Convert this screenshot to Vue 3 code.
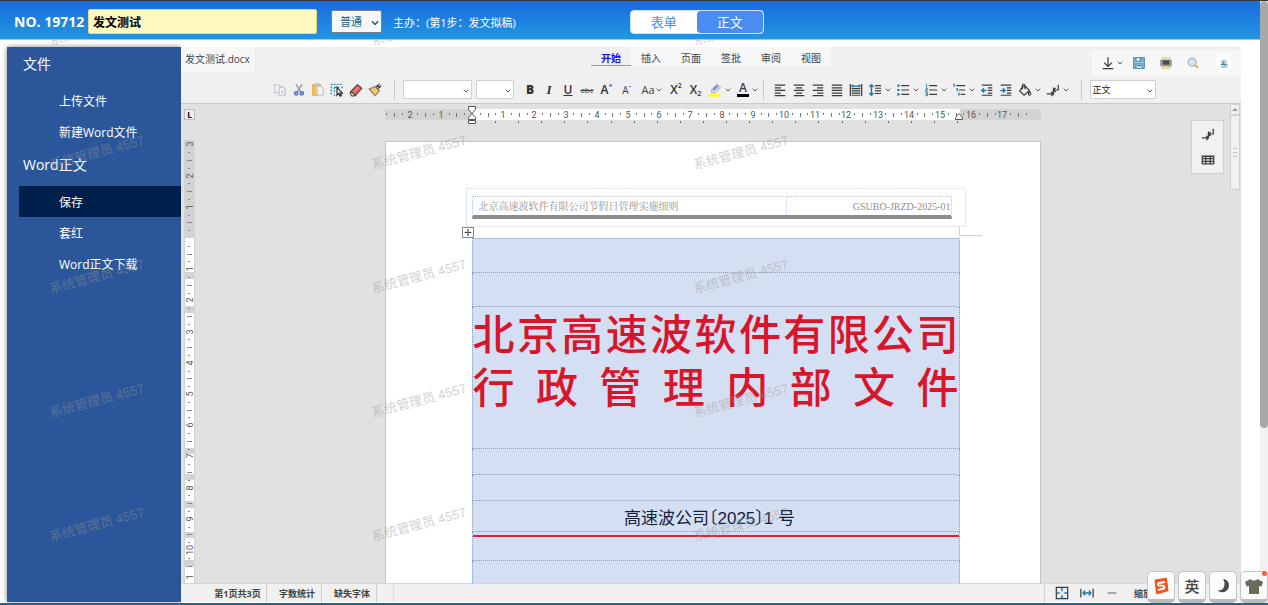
<template>
  <div class="page">
    <header class="topbar">
      <label class="doc-no" for="title">NO. 19712</label>
      <input id="title" v-model="title" class="title-input" type="text" />
      <div class="select-wrap level">
        <select v-model="level" aria-label="缓急">
          <option>普通</option>
        </select>
        <svg class="chev" viewBox="0 0 8 6"><path d="M1 1.2 4 4.4 7 1.2" /></svg>
      </div>
      <span class="step">主办：(第1步：发文拟稿)</span>
      <div class="switch">
        <button type="button" :class="{ on: view === 'form' }" @click="view = 'form'">表单</button>
        <button type="button" :class="{ on: view === 'text' }" @click="view = 'text'">正文</button>
      </div>
    </header>

    <main class="main">
      <nav class="sidebar">
        <section v-for="group in menu" :key="group.name">
          <h3>{{ group.name }}</h3>
          <button
            v-for="item in group.items"
            :key="item"
            type="button"
            :class="{ active: item === current }"
            @click="current = item"
          >{{ item }}</button>
        </section>
      </nav>

      <div class="editor">
        <div class="tabbar">
          <span class="file-name">发文测试.docx</span>
          <div class="tabs">
            <button
              v-for="t in tabs"
              :key="t"
              type="button"
              :class="{ active: t === tab }"
              @click="tab = t"
            >{{ t }}</button>
          </div>
          <div class="quick">
            <button type="button" class="drop" aria-label="下载">
              <svg class="ico" viewBox="0 0 16 16"><path d="M8 1.5v10M3.5 7.5 8 12l4.5-4.5M2 14.5h12" /></svg>
              <svg class="chev" viewBox="0 0 8 6"><path d="M1 1.2 4 4.4 7 1.2" /></svg>
            </button>
            <button type="button" aria-label="保存">
              <svg class="ico" viewBox="0 0 16 16">
                <path d="M2 2h12v12H2z" fill="#a9cfe0" stroke="#4388ad" />
                <path d="M4.5 2h7v4h-7z" fill="#f3f8fa" stroke="#4388ad" />
                <path d="M4.5 9h7v5h-7z" fill="#fff" stroke="#4388ad" />
                <path d="M9.5 2.5v3M6 11h4" stroke="#2f6f94" />
              </svg>
            </button>
            <button type="button" aria-label="打印">
              <svg class="ico" viewBox="0 0 16 16">
                <path d="M4 2h8v3H4zM4 11h8v3H4z" fill="#f3ecb9" stroke="#d2c98a" />
                <path d="M2 5h12v6H2z" fill="#b5b5b5" stroke="#999" />
                <path d="M4 5h8v5H4z" fill="#4a4a4a" stroke="none" />
              </svg>
            </button>
            <button type="button" aria-label="查找">
              <svg class="ico" viewBox="0 0 16 16">
                <circle cx="7" cy="7" r="4.5" fill="#cfe6f5" stroke="#b4bcc2" stroke-width="1.6" />
                <path d="m10.5 10.5 3 3" stroke="#f2a93b" stroke-width="2.6" />
              </svg>
            </button>
            <button type="button" class="avatar">系</button>
          </div>
        </div>

        <div class="toolbar">
          <button v-for="n in clip" :key="n" type="button" class="tool" :aria-label="n">
            <svg class="ico" viewBox="0 0 16 16">
              <g v-if="n === '复制'" fill="#f4f4f6" stroke="#c3c6ce">
                <path d="M2 2h5l2 2v7H2z" /><path d="M7 5h5l2 2v7H7z" /><path d="M9 9h3M9 11h3" />
              </g>
              <g v-else-if="n === '剪切'">
                <path d="M4.5 1.5 10 10M11.5 1.5 6 10" stroke="#99a" stroke-width="1.6" />
                <circle cx="4.8" cy="11.8" r="2" fill="#8ca5e4" stroke="#5775cb" stroke-width="1.5" />
                <circle cx="11.2" cy="11.8" r="2" fill="#8ca5e4" stroke="#5775cb" stroke-width="1.5" />
              </g>
              <g v-else-if="n === '粘贴'">
                <path d="M2 2h9v12H2z" fill="#f3c64c" stroke="#e0b34a" />
                <path d="M7 4h5l2 2v8H7z" fill="#f3f3f5" stroke="#c8cad0" />
                <path d="M5 1h4v2H5z" fill="#ddd" stroke="#bbb" />
              </g>
              <g v-else-if="n === '选择'">
                <path d="M1 1.5h13M1.500 4v10M4 14h4M5 5v7M14 4v3M5 5h7" stroke="#1d7fb4" stroke-width="1.4" stroke-dasharray="2 1.4" />
                <path d="M8 5v9l2-2 1.6 3 1.5-.8L11.500 11.500H14z" fill="#fff" stroke="#333" />
              </g>
              <g v-else-if="n === '清除'">
                <path d="m9.500 2 5 4-7 8-5.500-4z" fill="#f26d6d" stroke="#543" />
                <path d="m2 10 5.500 4-1 .8H3.200L1.500 12z" fill="#fff" stroke="#543" />
              </g>
              <g v-else>
                <path d="M1.500 7 8 4l5 5-5 5.500z" fill="#fbc85f" stroke="#977" />
                <path d="M9 5 13.500 1M11 6.500l4-3.500M10 2.500l4 3" stroke="#444" stroke-width="1.5" />
              </g>
            </svg>
          </button>
          <i class="sep"></i>
          <div class="select-wrap font">
            <select aria-label="字体"><option></option></select>
            <svg class="chev" viewBox="0 0 8 6"><path d="M1 1.2 4 4.4 7 1.2" /></svg>
          </div>
          <div class="select-wrap size">
            <select aria-label="字号"><option></option></select>
            <svg class="chev" viewBox="0 0 8 6"><path d="M1 1.2 4 4.4 7 1.2" /></svg>
          </div>

          <button type="button" class="tool txt"><b>B</b></button>
          <button type="button" class="tool txt serif"><i>I</i></button>
          <button type="button" class="tool txt"><u>U</u></button>
          <button type="button" class="tool tiny"><s>abc</s></button>
          <button type="button" class="tool mid txt">A<sup class="blue">+</sup></button>
          <button type="button" class="tool mid small">A<sup class="blue">-</sup></button>
          <button type="button" class="tool drop case">
            <span>Aa</span>
            <svg class="chev" viewBox="0 0 8 6"><path d="M1 1.2 4 4.4 7 1.2" /></svg>
          </button>
          <button type="button" class="tool txt">X<sup>2</sup></button>
          <button type="button" class="tool mid txt">X<sub>2</sub></button>
          <button type="button" class="tool drop" aria-label="突出显示">
            <svg class="ico" viewBox="0 0 16 16">
              <path d="M4 8 10 1.500l4 3.500-6 6H4z" fill="#dcdcec" stroke="#b9b9c8" />
              <path d="m6 8 5-5" stroke="#7d7df0" stroke-width="2.4" />
              <path d="M1 14h13" stroke="#ff0" stroke-width="3" />
            </svg>
            <svg class="chev" viewBox="0 0 8 6"><path d="M1 1.2 4 4.4 7 1.2" /></svg>
          </button>
          <button type="button" class="tool drop" aria-label="字体颜色">
            <span class="font-color">A</span>
            <svg class="chev" viewBox="0 0 8 6"><path d="M1 1.2 4 4.4 7 1.2" /></svg>
          </button>
          <i class="sep near"></i>

          <button v-for="n in para" :key="n.name" type="button" class="tool" :class="{ drop: n.drop }" :aria-label="n.name">
            <svg class="ico" viewBox="0 0 16 16">
              <path v-if="n.frame" d="M1.500 1v14M14.500 1v14" />
              <path v-if="n.d" :d="n.d" />
              <path v-if="n.accent" :d="n.accent" stroke="#1d78ad" :stroke-width="n.w || 1.300" />
            </svg>
            <svg v-if="n.drop" class="chev" viewBox="0 0 8 6"><path d="M1 1.2 4 4.4 7 1.2" /></svg>
          </button>
          <i class="sep"></i>
          <div class="select-wrap style">
            <select aria-label="样式"><option>正文</option></select>
            <svg class="chev" viewBox="0 0 8 6"><path d="M1 1.2 4 4.4 7 1.2" /></svg>
          </div>
        </div>

        <div class="workspace">
          <div class="v-side">
            <div class="tab-stop">L</div>
            <svg class="v-ruler" width="11" height="443">
              <rect width="11" height="443" fill="#d3d3d3" />
              <rect v-for="s in vSegments" :key="s[0]" x="1" :y="s[0]" width="9" :height="s[1]" fill="#fff" />
              <rect v-for="t in vTicks" :key="t.y" :x="t.half ? 3 : 4" :y="t.y" :width="t.half ? 5 : 2" height="1" fill="#888" />
              <text v-for="n in vNumbers" :key="n.y" :transform="`translate(9 ${n.y}) rotate(-90)`" text-anchor="middle">{{ n.label }}</text>
            </svg>
          </div>

          <div class="canvas">
            <svg class="h-ruler" width="656" height="19">
              <rect width="656" height="11" y="3" fill="#d3d3d3" />
              <rect x="87" y="3" width="488" height="11" fill="#fff" />
              <rect v-for="t in hTicks" :key="t.x" :x="t.x" y="7" width="1" :height="t.half ? 4 : 2" fill="#777" />
              <rect v-for="x in hStops" :key="'s' + x" :x="x" y="15" width="1" height="2" fill="#666" />
              <text v-for="n in hNumbers" :key="n.x" :x="n.x" y="12" text-anchor="middle">{{ n.label }}</text>
              <path d="M83.500.500h7v3l-3.500 4-3.500-4zM83.500 13.500v-2l3.500-4 3.500 4v2zM83.500 14.500h7v3h-7z" fill="#fff" stroke="#555" />
              <path d="M570.500 13.500v-2l3.500-4 3.500 4v2z" fill="#fff" stroke="#555" />
            </svg>

            <article class="sheet">
              <div class="sheet-head">
                <div class="head-row">
                  <span>北京高速波软件有限公司节假日管理实施细则</span>
                  <span class="code">GSUBO-JRZD-2025-01</span>
                </div>
              </div>
              <div class="corner">
                <span class="handle">
                  <svg viewBox="0 0 11 11"><path d="M5.500 1.500v8M1.500 5.500h8M4.500 2.500h2M4.500 8.500h2M2.500 4.500v2M8.500 4.500v2" /></svg>
                </span>
                <span class="mark"></span>
              </div>
              <table>
                <tbody>
                  <tr class="tall"><td></td></tr>
                  <tr class="tall"><td></td></tr>
                  <tr class="red-head">
                    <td>
                      <p>北京高速波软件有限公司</p>
                      <p>行政管理内部文件</p>
                    </td>
                  </tr>
                  <tr><td></td></tr>
                  <tr><td></td></tr>
                  <tr class="number"><td>高速波公司〔2025〕1 号</td></tr>
                  <tr class="rule"><td></td></tr>
                  <tr class="tall"><td></td></tr>
                </tbody>
              </table>
            </article>
          </div>

          <div class="float-tools">
            <button type="button" aria-label="段落标记">
              <svg class="ico" viewBox="0 0 16 16"><path :d="markPath" /></svg>
            </button>
            <button type="button" aria-label="表格">
              <svg class="ico" viewBox="0 0 16 16"><path d="M1.500 3.500h13v9h-13zM1.500 6.500h13M1.500 9.500h13M5.500 3.500v9M10.500 3.500v9M1.500 4h13" /></svg>
            </button>
          </div>

          <div class="doc-scroll">
            <span class="up"></span>
            <span class="thumb"></span>
          </div>
        </div>

        <footer class="status">
          <button type="button" class="pages">第1页共3页</button>
          <button type="button">字数统计</button>
          <button type="button">缺失字体</button>
          <i class="blank"></i>
          <div class="zoom">
            <button type="button" aria-label="整页">
              <svg class="ico" viewBox="0 0 16 16">
                <path d="M1.500 1.500h13v13h-13z" />
                <path d="M8 3v3M8 10v3M3 8h3M10 8h3M7 4l1-1 1 1M7 12l1 1 1-1M4 7 3 8l1 1M12 7l1 1-1 1" stroke="#1d78ad" />
              </svg>
            </button>
            <button type="button" aria-label="页宽">
              <svg class="ico" viewBox="0 0 16 16">
                <path d="M1 3v10M15 3v10" />
                <path d="M3.500 8h9M6 5 3.500 8 6 11M10 5l2.500 3-2.500 3" stroke="#1d78ad" stroke-width="1.5" />
              </svg>
            </button>
            <button type="button" aria-label="缩小">
              <svg class="ico" viewBox="0 0 16 16"><path d="M3 8h10" stroke="#888" stroke-width="1.5" /></svg>
            </button>
            <span>缩放</span>
          </div>
        </footer>
      </div>
    </main>

    <div class="page-scroll"><span></span></div>

    <div class="watermark" aria-hidden="true">
      <span v-for="n in 15" :key="n">系统管理员 4557</span>
    </div>

    <div class="ime">
      <button type="button" aria-label="输入法">
        <svg viewBox="0 0 18 18">
          <path d="M3.500 3.500 14 1.800l1.500 11.500-10.500 3z" fill="#f4511e" stroke="#f4511e" stroke-width="2" stroke-linejoin="round" />
          <path d="M13 5 7 6c-1.500.4-1.300 2.500 0 2.600l4 .2c1.800.2 1.900 2.600.2 3L5.800 13" fill="none" stroke="#fff" stroke-width="2" />
        </svg>
      </button>
      <button type="button">英</button>
      <button type="button" aria-label="半角">
        <svg viewBox="0 0 18 18"><path d="M9 2c5 .500 7 5 5.500 9S8 17 3.500 13.500c4 0 6-1.500 6.700-4.500S10.500 4 9 2z" fill="#4a4a4a" /></svg>
      </button>
      <button type="button" class="skin" aria-label="皮肤">
        <svg viewBox="0 0 18 18"><path d="M5.500 2c1.500 2 5.500 2 7 0L18 5l-1.500 4.500-2.500-.5v8H4V9l-2.500.5L0 5z" fill="#6b6a5c" /></svg>
      </button>
    </div>
  </div>
</template>

<script setup>
import { ref } from "vue";

const title = ref("发文测试");
const level = ref("普通");
const view = ref("text");
const current = ref("保存");
const tab = ref("开始");

const menu = [
  { name: "文件", items: ["上传文件", "新建Word文件"] },
  { name: "Word正文", items: ["保存", "套红", "Word正文下载"] },
];
const tabs = ["开始", "插入", "页面", "签批", "审阅", "视图"];
const clip = ["复制", "剪切", "粘贴", "选择", "清除", "格式刷"];

const markPath = "M1 12.500h7M6 10l2.500 2.500L6 15M8.500 12V5M8.500 8H14V2M11 5.500 8.500 8l2.500 2.500";

const para = [
  { name: "左对齐", d: "M2 2.500h12M2 5.500h7M2 8.500h12M2 11.500h7M2 14.500h12" },
  { name: "居中", d: "M2 2.500h12M4.500 5.500h7M2 8.500h12M4.500 11.500h7M2 14.500h12" },
  { name: "右对齐", d: "M2 2.500h12M7 5.500h7M2 8.500h12M7 11.500h7M2 14.500h12" },
  { name: "两端对齐", d: "M2 2.500h12M2 5.500h12M2 8.500h12M2 11.500h12M2 14.500h12" },
  { name: "分散对齐", frame: true, d: "M3 6.500h10M3 9h10M3 11.500h10M3 14h10", accent: "M3 3.500h10M5 2 3 3.500 5 5M11 2l2 1.500L11 5" },
  { name: "行距", drop: true, d: "M8 3h7M8 6h7M8 9h7M8 12h7", accent: "M4 2v12M1.500 4.500 4 2l2.500 2.500M1.500 11.500 4 14l2.500-2.500", w: 1.6 },
  { name: "项目符号", drop: true, d: "M6 3h9M6 8h9M6 13h9", accent: "M1.500 3h2.500M1.500 8h2.500M1.500 13h2.500", w: 2.5 },
  { name: "编号", drop: true, d: "M6 3h9M6 8h9M6 13h9", accent: "M2 1.500h1v4M1.500 6.500H4V8H2v1.500h2M1.500 11H4v3.500H1.500M2 12.700h2", w: 1 },
  { name: "多级列表", drop: true, d: "M5 3h10M8 8h7M10 13h5", accent: "M1.500 1.500h1v3M5 6.500h1v3M7 11.500h1v3" },
  { name: "减少缩进", d: "M2 2.500h12M9 5.500h5M9 8.500h5M9 11.500h5M2 14h12", accent: "M7.500 8.500H2M4.500 6 2 8.500 4.500 11", w: 1.6 },
  { name: "增加缩进", d: "M2 2.500h12M9 5.500h5M9 8.500h5M9 11.500h5M2 14h12", accent: "M1.500 8.500H7M4.500 6 7 8.500 4.500 11", w: 1.6 },
  { name: "底纹", drop: true, d: "M5 4.500 2 9l5 5 6-5.500-5-5zM5 7V2.500C5 1 8 1 8 3v4M13 9.500c2.500 3 1.500 4.500 0 4.500s-1.500-2 0-4.500z" },
  { name: "段落标记", drop: true, d: markPath },
];

// 标尺：1 厘米 = 31.2px
const CM = 31.2;

const hNumbers = [];
const hTicks = [];
for (let q = -11; q <= 71; q++) {
  const x = 87 + (q * CM) / 4;
  if (q % 4 === 0) {
    if (q !== 0) hNumbers.push({ x: Math.round(x), label: Math.abs(q / 4) });
  } else {
    hTicks.push({ x: Math.round(x), half: q % 2 === 0 });
  }
}
const hStops = Array.from({ length: 21 }, (_, i) => Math.round(110 + i * 23.1));

const vNumbers = [{ y: 437, label: 1 }];
const vTicks = [];
for (let q = -12; q <= 42; q++) {
  const y = 98 + (q * CM) / 4;
  if (q % 4 === 0) {
    if (q !== 0) vNumbers.push({ y: Math.round(y), label: Math.abs(q / 4) });
  } else {
    vTicks.push({ y: Math.round(y), half: q % 2 === 0 });
  }
}
// 白色区段 [起点, 高度]，对应表格的各行
const vSegments = [
  [98, 34], [139, 27], [173, 135], [314, 20], [340, 21], [368, 24], [398, 22], [427, 16],
];
</script>

<style>
body {
  margin: 0;
  overflow: hidden;
}
</style>

<style scoped>
.page {
  position: relative;
  display: flex;
  flex-direction: column;
  height: 100vh;
  box-sizing: border-box;
  border-top: 1px solid #33383f;
  border-bottom: 2px solid #1f6492;
  background: #fff;
  font-family: "Open Sans", "Noto Sans CJK SC", sans-serif;
  overflow: hidden;
}

button {
  border: 0;
  padding: 0;
  background: none;
  color: inherit;
  font: inherit;
}

/* 顶部 */
.topbar {
  position: relative;
  z-index: 3;
  display: flex;
  align-items: center;
  height: 39px;
  padding: 3px 14px 0;
  box-sizing: border-box;
  flex: none;
  background: linear-gradient(#1a6be0, #2196e0);
  border-bottom: 1px solid #b5c3cc;
  color: #fff;
}

.doc-no {
  width: 74px;
  font-size: 14px;
  font-weight: bold;
  white-space: nowrap;
}

.title-input {
  width: 229px;
  height: 25px;
  box-sizing: border-box;
  padding: 0 4px;
  border: 1px solid #e3d88f;
  border-radius: 2px;
  background: #fff8c1;
  color: #000;
  font: bold 12px "Open Sans", "Noto Sans CJK SC", sans-serif;
}

.select-wrap {
  position: relative;
}

.select-wrap select {
  display: block;
  appearance: none;
  width: 100%;
  height: 100%;
  box-sizing: border-box;
  border: 1px solid #d0d0d0;
  border-radius: 1px;
  background: #fff;
  font-family: inherit;
}

.select-wrap .chev {
  position: absolute;
  right: 3px;
  top: 50%;
  margin-top: -2px;
}

.level {
  width: 51px;
  height: 23px;
  margin-left: 14px;
}

.level select {
  padding: 0 8px;
  border-color: #6f7f8f;
  border-radius: 2px;
  background: #f5f7f9;
  color: #1f6080;
  font-size: 11px;
}

.level .chev {
  width: 8px;
  stroke: #1f6080;
  stroke-width: 1.5;
}

.step {
  margin-left: 11px;
  font-size: 11px;
  white-space: nowrap;
}

.switch {
  display: flex;
  width: 134px;
  height: 24px;
  box-sizing: border-box;
  margin-left: 114px;
  border: 1px solid #cfe1ff;
  border-radius: 4px;
  background: #fff;
}

.switch button {
  flex: 1;
  border-radius: 4px;
  color: #4a8cf0;
  font-size: 13px;
}

.switch .on {
  background: #4a8cf0;
  color: #fff;
}

/* 主体 */
.main {
  display: flex;
  flex: 1;
  min-height: 0;
  margin: 7px 27px 1px 7px;
}

.sidebar {
  width: 174px;
  flex: none;
  background: #2b579a;
  box-shadow: 0 0 5px rgba(0, 0, 0, 0.5);
  color: #fff;
}

.sidebar section {
  margin-bottom: 1px;
}

.sidebar h3 {
  margin: 0 0 4px;
  padding-left: 16px;
  font-size: 14px;
  font-weight: normal;
  line-height: 34px;
}

.sidebar button {
  display: block;
  width: 162px;
  height: 31px;
  margin-left: 12px;
  padding-left: 40px;
  font-size: 12px;
  text-align: left;
}

.sidebar .active {
  background: #001f4c;
}

.editor {
  position: relative;
  display: flex;
  flex: 1;
  flex-direction: column;
  min-width: 0;
  background: #f0f0f0;
  color: #444;
}

.chev {
  width: 6px;
  height: 6px;
  flex: none;
  fill: none;
  stroke: #555;
  stroke-width: 1.3;
}

.ico {
  width: 14px;
  height: 14px;
  flex: none;
  fill: none;
  stroke: #3a3a3a;
  stroke-width: 1.4;
}

.tabbar {
  display: grid;
  grid-template-columns: 1fr auto 1fr;
  align-items: start;
  height: 29px;
  flex: none;
}

.file-name {
  justify-self: start;
  padding: 0 4px;
  background: #f7f7f7;
  font-size: 10px;
  line-height: 25px;
}

.tabs {
  display: flex;
  background: #f7f7f7;
}

.tabs button {
  width: 40px;
  height: 19px;
  border-bottom: 1px solid transparent;
  padding-top: 3px;
  font-size: 10px;
  line-height: 14px;
}

.tabs .active {
  border-color: #8c8cff;
  background: #f0f0f0;
  color: #1a0dff;
  font-weight: bold;
}

.quick {
  justify-self: end;
  display: flex;
  align-items: center;
  width: 149px;
  height: 26px;
  margin-top: 3px;
  background: #f7f7f7;
}

.quick button {
  display: flex;
  align-items: center;
  justify-content: center;
  width: 27px;
  height: 22px;
}

.quick .drop {
  width: 33px;
  padding-left: 6px;
  gap: 2px;
  box-sizing: border-box;
}

.quick .avatar {
  width: 16px;
  height: 16px;
  margin-left: 10px;
  border-radius: 8px;
  background: #fff;
  color: #356;
  font-size: 8px;
}

.toolbar {
  display: flex;
  align-items: center;
  justify-content: center;
  height: 27px;
  padding-left: 4px;
  flex: none;
  border-bottom: 1px solid #cacaca;
}

.tool {
  display: flex;
  align-items: center;
  justify-content: center;
  width: 19px;
  height: 20px;
  flex: none;
  font-size: 11px;
}

.tool.mid {
  width: 20px;
}

.tool.drop {
  width: 28px;
  gap: 3px;
}

.tool.case {
  width: 30px;
  gap: 1px;
}

.txt {
  font-size: 12px;
  font-weight: 600;
  color: #333;
}

.small {
  font-size: 10px;
}

.serif {
  font-family: "Liberation Serif", serif;
  font-size: 13px;
}

.tiny {
  font-size: 8px;
}

.tool sup,
.tool sub {
  margin: 2px 0;
  font-size: 7px;
  line-height: 8px;
}

.tool sup {
  align-self: flex-start;
}

.tool sub {
  align-self: flex-end;
}

.blue {
  color: #1d78ad;
  font-weight: bold;
}

.font-color {
  width: 12px;
  border-bottom: 3px solid #000;
  font-size: 12px;
  font-weight: 600;
  line-height: 12px;
}

.sep {
  width: 1px;
  height: 20px;
  flex: none;
  margin: 0 8px 0 9px;
  background: #c8c8c8;
}

.sep.near {
  margin: 0 7px 0 1px;
}

.font,
.size,
.style {
  height: 19px;
  flex: none;
}

.font {
  width: 69px;
}

.size {
  width: 38px;
  margin: 0 7px 0 4px;
}

.style {
  width: 66px;
}

.style select {
  padding: 0 2px;
  color: #222;
  font-size: 9px;
}

/* 文档区 */
.workspace {
  display: flex;
  flex: 1;
  min-height: 0;
  padding-left: 3px;
  background: #e1e1e1;
  overflow: hidden;
}

.v-side {
  width: 11px;
  flex: none;
}

.tab-stop {
  width: 11px;
  height: 11px;
  margin: 5px 0 20px;
  border: 1px solid #bbb;
  box-sizing: border-box;
  background: #eee;
  color: #000;
  font-size: 8px;
  font-weight: bold;
  line-height: 10px;
  text-align: center;
}

.v-ruler,
.h-ruler {
  display: block;
}

.v-ruler text,
.h-ruler text {
  fill: #555;
  font-family: Roboto, "Liberation Sans", sans-serif;
  font-size: 9px;
}

.canvas {
  display: flex;
  flex: 1;
  flex-direction: column;
  align-items: center;
  min-width: 0;
  padding-top: 2px;
}

.h-ruler {
  flex: none;
}

.sheet {
  width: 656px;
  flex: 1 0 auto;
  margin-top: 16px;
  padding: 46px 0 0;
  box-sizing: border-box;
  border: 1px solid #c4c4c4;
  border-bottom: 0;
  background: #fff;
}

.sheet-head {
  width: 500px;
  height: 39px;
  box-sizing: border-box;
  margin-left: 80px;
  padding: 7px 13px 0 5px;
  border: 1px dotted #cdd8ea;
}

.head-row {
  display: flex;
  justify-content: space-between;
  height: 23px;
  box-sizing: border-box;
  padding: 0 0 0 6px;
  border: 1px dotted #b5c6e0;
  border-bottom: 4px solid #8c8c8c;
  color: #8f8f8f;
  font-family: "Liberation Serif", "Noto Serif CJK SC", "Noto Sans CJK SC", serif;
  font-size: 10px;
  line-height: 19px;
}

.code {
  width: 164px;
  border-left: 1px dotted #cdd8ea;
  text-align: right;
}

.corner {
  display: flex;
  justify-content: space-between;
  width: 532px;
  height: 11px;
  margin-left: 64px;
}

.handle {
  width: 12px;
  height: 11px;
  margin-left: 12px;
  border: 1px solid #888;
  box-sizing: border-box;
  background: #fff;
}

.handle svg {
  display: block;
  width: 10px;
  height: 9px;
  fill: none;
  stroke: #333;
}

.mark {
  width: 22px;
  height: 8px;
  border-bottom: 1px solid #d0d0d0;
  border-left: 1px solid #d0d0d0;
}

.sheet table {
  width: 488px;
  margin-left: 86px;
  border-collapse: collapse;
  background: #d5dff3;
}

.sheet td {
  height: 26px;
  box-sizing: border-box;
  padding: 0;
  border: 1px dotted #7f9dcf;
}

.sheet .tall td {
  height: 34px;
}

.sheet .red-head td {
  height: 142px;
  vertical-align: top;
}

.red-head p {
  margin: 0;
  color: #d9152b;
  font-size: 42px;
  font-weight: 500;
  line-height: 53px;
  text-align: justify;
  text-align-last: justify;
  white-space: nowrap;
}

.sheet .number td {
  height: 31px;
  padding: 6px 12px 0 0;
  color: #14203c;
  font-family: "Liberation Sans", "Noto Sans CJK SC", sans-serif;
  font-size: 17px;
  font-feature-settings: "halt";
  line-height: 24px;
  text-align: center;
}

.sheet .rule td {
  height: 29px;
  background: linear-gradient(#dc2036, #dc2036) 0 3px / 100% 2px no-repeat;
}

.float-tools {
  display: flex;
  flex-direction: column;
  width: 33px;
  height: 54px;
  box-sizing: border-box;
  position: absolute;
  right: 17px;
  top: 73px;
  border: 1px solid #d0d0d0;
  background: #f1f1f1;
}

.float-tools button {
  flex: 1;
  display: flex;
  align-items: center;
  justify-content: center;
}

.doc-scroll {
  width: 10px;
  flex: none;
  margin-right: 1px;
}

.doc-scroll span {
  display: block;
  box-sizing: border-box;
  border: 1px solid #d0d0d0;
  background: #f1f1f1;
}

.doc-scroll .up {
  position: relative;
  height: 11px;
}

.doc-scroll .up::after {
  content: "";
  position: absolute;
  left: 1px;
  top: 3px;
  border: 3px solid transparent;
  border-top: 0;
  border-bottom-color: #999;
}

.doc-scroll .thumb {
  display: flex;
  height: 75px;
  align-items: center;
  justify-content: center;
}

.doc-scroll .thumb::after {
  content: "";
  width: 4px;
  height: 9px;
  background: repeating-linear-gradient(#c4c4c4 0 1px, #f1f1f1 1px 4px);
}

/* 状态栏 */
.status {
  display: flex;
  height: 19px;
  flex: none;
  padding-left: 20px;
  border-top: 1px solid #d5d5d5;
  box-sizing: border-box;
  font-size: 9px;
  font-weight: bold;
}

.status > button {
  width: 55px;
  padding-left: 6px;
  border-right: 1px solid #cfcfcf;
}

.status .pages {
  width: 66px;
  padding-left: 8px;
}

.blank {
  width: 16px;
  border-right: 1px solid #ddd;
}

.zoom {
  display: flex;
  align-items: center;
  width: 197px;
  margin-left: auto;
  padding-left: 4px;
  box-sizing: border-box;
  border-left: 1px solid #cfcfcf;
}

.zoom button {
  display: flex;
  justify-content: center;
  width: 25px;
}

.zoom span {
  margin-left: 10px;
}

.page-scroll {
  position: absolute;
  right: 0;
  top: 0;
  bottom: 0;
  z-index: 4;
  width: 8px;
  background: #f1f1f1;
}

.page-scroll span {
  display: block;
  height: 71%;
  border-radius: 4px;
  background: #a8a8a8;
}

/* 水印 */
.watermark {
  position: absolute;
  left: 48px;
  top: 16px;
  z-index: 2;
  display: grid;
  grid-template-columns: repeat(3, 322px);
  grid-auto-rows: 124px;
  color: rgba(150, 150, 150, 0.45);
  font-family: "Liberation Sans", "Noto Sans CJK SC", sans-serif;
  font-size: 13px;
  line-height: 24px;
  pointer-events: none;
}

.watermark span {
  width: 98px;
  height: 24px;
  text-align: center;
  white-space: nowrap;
  transform: rotate(-15deg);
}

/* 输入法浮条 */
.ime {
  position: absolute;
  right: 0;
  bottom: 0;
  z-index: 5;
  display: flex;
  gap: 3px;
}

.ime button {
  display: flex;
  align-items: center;
  justify-content: center;
  width: 28px;
  height: 32px;
  box-sizing: border-box;
  border: 1px solid #c4c4c4;
  border-bottom: 4px solid #bbb;
  border-radius: 5px;
  background: #fcfcfc;
  color: #444;
  font-size: 15px;
  font-weight: 500;
}

.ime svg {
  width: 18px;
  height: 18px;
}

.ime .skin {
  position: relative;
}

.skin::after {
  content: "";
  position: absolute;
  right: 0;
  top: -1px;
  width: 5px;
  height: 5px;
  border-radius: 50%;
  background: #ff5a36;
}
</style>
